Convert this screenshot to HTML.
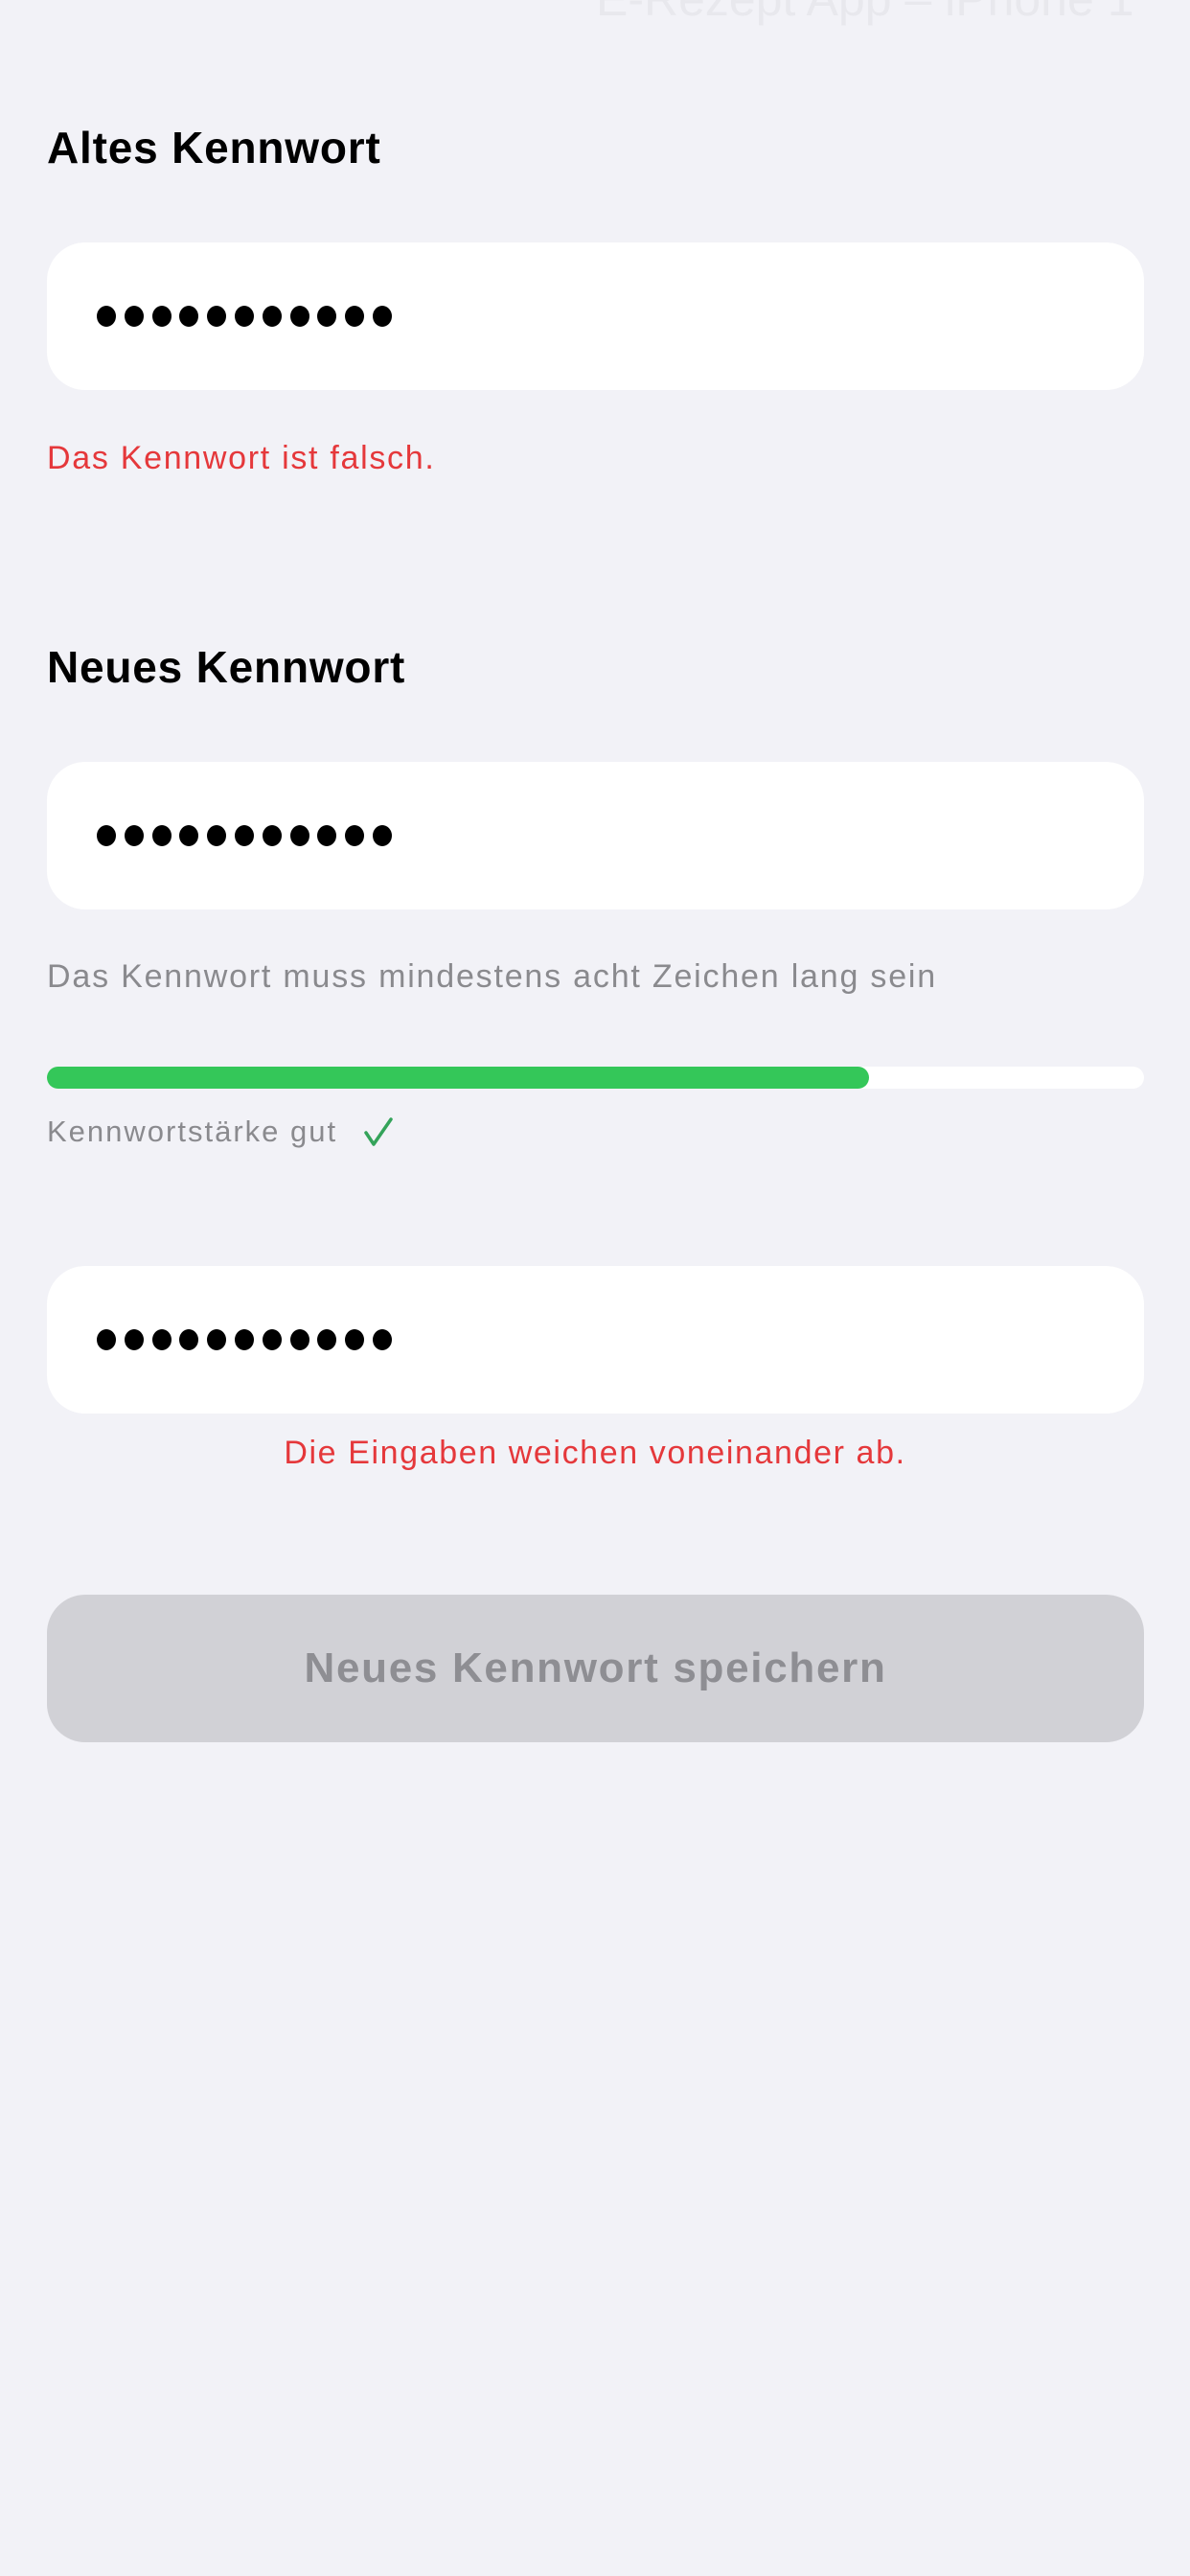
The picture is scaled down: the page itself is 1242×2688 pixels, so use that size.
<!DOCTYPE html>
<html><head><meta charset="utf-8"><style>
html,body{margin:0;padding:0}
body{width:1242px;height:2688px;background:#f2f2f7;position:relative;overflow:hidden;font-family:"Liberation Sans",sans-serif}
.a{position:absolute;white-space:nowrap}
.t{font-weight:bold;font-size:46px;color:#000;left:49px;line-height:1;letter-spacing:0.8px}
.f{position:absolute;left:49px;width:1145px;height:154px;background:#fff;border-radius:40px}
.dots{position:absolute;left:52px;top:0;height:100%;display:flex;align-items:center;gap:8.8px}
.dots i{display:block;width:20px;height:22px;border-radius:50%;background:#000}
.err{color:#e5383b;font-size:34px;line-height:1;letter-spacing:1.7px}
</style></head><body>
<div class="a" style="left:622px;top:-30px;font-size:50px;color:#e8e8ed;width:560px;overflow:hidden">E-Rezept App – iPhone 14</div>

<div class="a t" style="top:131px">Altes Kennwort</div>
<div class="f" style="top:253px"><div class="dots"><i></i><i></i><i></i><i></i><i></i><i></i><i></i><i></i><i></i><i></i><i></i></div></div>
<div class="a err" style="left:49px;top:461px">Das Kennwort ist falsch.</div>

<div class="a t" style="top:673px">Neues Kennwort</div>
<div class="f" style="top:795px"><div class="dots"><i></i><i></i><i></i><i></i><i></i><i></i><i></i><i></i><i></i><i></i><i></i></div></div>
<div class="a" style="left:49px;top:1002px;font-size:34px;color:#8a8a8e;line-height:1;letter-spacing:1.8px">Das Kennwort muss mindestens acht Zeichen lang sein</div>

<div style="position:absolute;left:49px;top:1113px;width:1145px;height:23px;background:#fff;border-radius:12px"></div>
<div style="position:absolute;left:49px;top:1113px;width:858px;height:23px;background:#34c759;border-radius:12px"></div>
<div class="a" style="left:49px;top:1165px;font-size:31px;color:#8a8a8e;line-height:1;letter-spacing:2px">Kennwortstärke gut</div>
<svg class="a" style="left:378px;top:1164px" width="34" height="34" viewBox="0 0 34 34"><path d="M4 18 L12 30 L30 4" fill="none" stroke="#34a35a" stroke-width="3.5" stroke-linecap="round" stroke-linejoin="round"/></svg>

<div class="f" style="top:1321px"><div class="dots"><i></i><i></i><i></i><i></i><i></i><i></i><i></i><i></i><i></i><i></i><i></i></div></div>
<div class="a err" style="left:0;width:1242px;text-align:center;top:1499px;letter-spacing:1.6px">Die Eingaben weichen voneinander ab.</div>

<div style="position:absolute;left:49px;top:1664px;width:1145px;height:154px;background:#d1d1d6;border-radius:40px;display:flex;align-items:center;justify-content:center;font-size:44px;font-weight:bold;color:#8e8e93;letter-spacing:1.7px">Neues Kennwort speichern</div>
</body></html>
